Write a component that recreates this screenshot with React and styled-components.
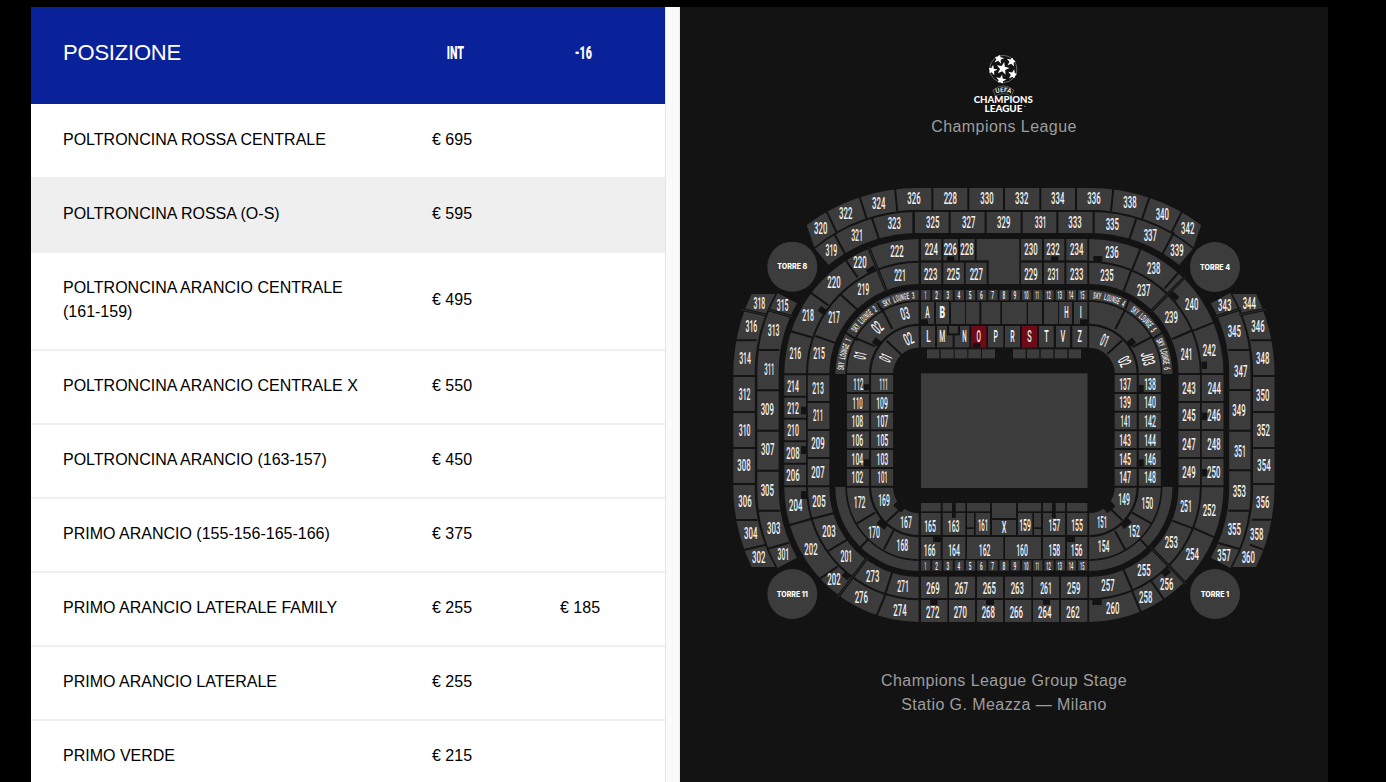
import React from "react";
import styled, { createGlobalStyle } from "styled-components";

const Global = createGlobalStyle`
  * { box-sizing: border-box; }
  html, body { margin: 0; background: #000; overflow: hidden; }
  body { font-family: "Liberation Sans", Arial, sans-serif; }
`;

const Page = styled.div`
  display: flex;
  width: 1386px;
  height: 782px;
  padding: 7px 58px 0 31px;
  background: #000;
  overflow: hidden;
`;
const Prices = styled.section`
  width: 634px;
  background: #fff;
  overflow: hidden;
`;
const Gutter = styled.div`
  width: 15px;
  background: #fafafa;
  border-left: 1px solid #e6e6e6;
  border-right: 1px solid #ededed;
`;
const HeadRow = styled.div`
  display: grid;
  grid-template-columns: 329px 127px 129px;
  align-items: center;
  height: 97px;
  padding: 0 0 6px 32px;
  background: #092199;
  color: #fff;
`;
const HeadTitle = styled.span`
  font-size: 22px;
  letter-spacing: -0.2px;
`;
const HeadCol = styled.span`
  text-align: center;
  font-family: Roboto, sans-serif;
  font-size: 19px;
  font-weight: 900;
  span { display: inline-block; transform: scaleX(0.56); }
`;
const Row = styled.div`
  display: grid;
  grid-template-columns: 329px 128px 128px;
  align-items: center;
  padding: 23px 0 25px 32px;
  margin-top: ${(p) => (p.$first ? 1 : 0)}px;
  border-bottom: 2px solid #efefef;
  background: ${(p) => (p.$active ? "#efefef" : "#fff")};
  color: #000;
  font-size: 16px;
  line-height: 24px;
`;
const Name = styled.span`
  white-space: pre-line;
`;
const Price = styled.span`
  padding-left: 40px;
`;
const MapPanel = styled.section`
  display: flex;
  flex-direction: column;
  align-items: center;
  width: 648px;
  background: #131313;
  color: #9d9d9d;
`;
const Emblem = styled.svg`
  display: block;
  width: 72px;
  height: 66px;
  margin-top: 43px;
`;
const Caption = styled.p`
  margin: ${(p) => p.$top}px 0 0;
  font-size: 16px;
  line-height: 24px;
  letter-spacing: 0.43px;
  text-align: center;
`;
const StadiumMap = styled.svg`
  display: block;
  width: 560px;
  height: 450px;
  margin: 41px 0 0 2px;
`;
const Cell = styled.rect`
  fill: ${(p) => p.$fill || "#3c3c3c"};
`;
const Cut = styled.path`
  fill: none;
  stroke: #131313;
  stroke-width: ${(p) => p.$w || 6};
`;
const SectorLabel = styled.text`
  fill: #f4f4f4;
  font-family: Roboto, sans-serif;
  font-weight: ${(p) => p.$weight || 500};
  text-anchor: middle;
`;

const ROWS = [
  ["POLTRONCINA ROSSA CENTRALE", "€ 695"],
  ["POLTRONCINA ROSSA (O-S)", "€ 595"],
  ["POLTRONCINA ARANCIO CENTRALE\n(161-159)", "€ 495"],
  ["POLTRONCINA ARANCIO CENTRALE X", "€ 550"],
  ["POLTRONCINA ARANCIO (163-157)", "€ 450"],
  ["PRIMO ARANCIO (155-156-165-166)", "€ 375"],
  ["PRIMO ARANCIO LATERALE FAMILY", "€ 255", "€ 185"],
  ["PRIMO ARANCIO LATERALE", "€ 255"],
  ["PRIMO VERDE", "€ 215"],
];

/* The map is drawn in tiles of 3 units per pixel; each tile has its own origin. */
const TILES = {
  nw: [725, 180], n: [905, 180], ne: [1085, 180],
  w: [725, 365], e: [1085, 365],
  sw: [725, 480], s: [905, 480], se: [1085, 480],
};

/* top, bottom and the x1-x2 pairs of one row of cells */
const CELLS = {
  n: [
    [24, 90, [[40, 553]]],
    [96, 159, [[40, 553]]],
    [177, 241, [[48, 109], [115, 159], [165, 209], [215, 343], [348, 411], [417, 478], [484, 547]]],
    [248, 312, [[48, 109], [115, 177], [182, 245], [348, 411], [417, 478], [484, 547]]],
    [240, 312, [[251, 343]]],
    [366, 432, [[48, 87], [93, 132], [138, 180], [183, 223], [229, 286], [291, 365], [369, 411], [417, 459], [462, 501], [507, 547]]],
    [438, 502, [[48, 90], [96, 143], [149, 193], [249, 295], [300, 345], [402, 446], [453, 495], [502, 547]]],
    [508, 535, [[66, 103], [107, 146], [149, 187], [190, 228], [231, 270], [324, 362], [366, 403], [407, 445], [449, 487], [491, 528]]],
  ],
  s: [
    [69, 94, [[48, 107], [113, 141], [152, 181], [186, 255], [339, 408], [414, 441], [452, 480], [486, 547]]],
    [69, 114, [[261, 333]]],
    [99, 165, [[48, 107], [113, 181], [212, 255], [339, 382], [414, 480], [486, 547]]],
    [99, 142, [[186, 207], [387, 408]]],
    [147, 165, [[186, 207], [387, 408]]],
    [120, 165, [[261, 333]]],
    [171, 237, [[48, 107], [113, 181], [186, 295], [300, 408], [414, 480], [486, 547]]],
    [290, 354, [[48, 127], [132, 210], [216, 294], [300, 379], [384, 462], [468, 547]]],
    [360, 426, [[48, 127], [132, 210], [216, 294], [300, 379], [384, 462], [468, 547]]],
  ],
};

const CUTS = {
  nw: "M305 94L335 158M403 48L425 116M510 26L517 94M566 94V162M440 112L463 180M328 163L361 223M362 240L398 292M257 338L310 376M344 341L396 388M195 453L260 472M271 468L335 490M457 368L475 398M470 385L502 447M360 457L400 482M395 475L450 499M485 482L530 525M30 481H95M95 510H163",
  n: "M82 22V92M190 22V92M297 22V92M406 22V92M513 22V92M26 94V162M134 94V162M242 94V162M350 94V162M457 94V162M566 94V162",
  ne: "M85 26L78 94M194 50L171 117M291 94L259 158M154 115L132 181M267 157L232 222M168 202L142 268M141 266L116 333M282 276L238 326M387 427L325 452M325 450L262 477M133 355L121 387M203 476L230 459M121 388L91 447M143 501L202 470M112 481L67 522M497 481H563M430 510H495",
  w: "M20 33H93M20 141H93M20 249H93M20 357H93M95 76H164M95 197H164M95 317H164M175 28H245M175 95H245M175 161H245M175 229H245M175 296H245M175 364H245M247 28H317M247 111H317M247 195H317M247 279H317M247 364H317M364 27H506M364 84H506M364 140H506M364 196H506M364 252H506M364 309H506M364 365H506",
  e: "M500 33H573M500 141H573M500 249H573M500 357H573M430 75H499M430 197H499M430 316H499M278 27H420M278 111H420M278 195H420M278 279H420M278 364H420M87 27H230M87 84H230M87 140H230M87 196H230M87 252H230M87 309H230M87 365H230",
  sw: "M30 120H98M98 92H165M56 210L125 194M128 206L192 188M192 136L258 117M258 117L328 99M308 214L367 179M283 297L338 260M402 207L430 177M395 131L450 98M477 208L506 150M485 125L530 84M478 350L502 276M455 407L479 350",
  se: "M503 12H573M500 119H567M430 92H497M400 189L467 208M495 194L535 209M262 122L325 146M325 144L389 172M140 97L200 131M90 153L121 209M78 88L112 121M166 178L193 207M116 270L143 333M199 304L238 360M141 333L168 398",
};

const SEAMS = {
  nw: "M430 200L485 335M48 388L128 406M128 389L203 411",
  ne: "M302 288L198 394M391 411L468 387M463 404L543 388",
  sw: "M427 233L338 352",
  se: "M198 203L304 312",
};

/* x, y, width, height, angle */
const NOTCHES = {
  nw: [[425, 262, 26, 16, -28], [281, 383, 24, 18, 35], [444, 477, 24, 20, 35]],
  n: [[126, 229, 22, 14], [438, 229, 22, 14], [48, 418, 21, 16], [525, 418, 24, 16], [126, 436, 39, 30], [204, 489, 22, 14]],
  ne: [[25, 228, 27, 17], [255, 340, 26, 16, 42], [350, 545, 16, 22], [126, 478, 24, 20, -38]],
  w: [[417, 58, 16, 18], [417, 283, 16, 22], [228, 125, 16, 23], [228, 243, 16, 24]],
  e: [[351, 143, 15, 22], [351, 312, 15, 22], [161, 60, 15, 22], [161, 283, 15, 22]],
  sw: [[228, 33, 18, 24], [353, 278, 22, 18, 38], [457, 124, 30, 18, 40], [508, 68, 32, 22, 40]],
  s: [[141, 92, 11, 22], [441, 92, 11, 22], [84, 169, 24, 17], [485, 169, 25, 17], [76, 358, 22, 17], [243, 358, 24, 17], [414, 358, 21, 17]],
  se: [[22, 356, 28, 19], [232, 270, 24, 16, -38], [108, 121, 30, 18, -42], [56, 70, 32, 22, -40]],
};

const LABELS = {
  nw: "320 287 145,322 362 100,324 461 69,326 567 54,319 319 209,321 396 165,323 508 129,222 516 212,220 405 246,221 525 285,220 327 307,219 415 328,218 249 406,217 327 412,216 211 520,215 282 520,318 103 370,315 173 376,316 79 438,313 146 450,314 60 533,311 133 568,03 540 400 -15,02 457 442 -45,02 550 476 -25,01 405 526 -78,01 482 533 -65",
  n: "228 136 54,330 246 54,332 350 54,334 458 54,336 567 54,325 83 127,327 191 127,329 296 127,331 407 127,333 510 127,224 79 206,226 136 206,228 186 206,230 378 206,232 444 206,234 515 206,223 77 281,225 145 281,227 214 281,229 378 281,231 445 281,233 515 281,A 67 396,H 484 396,I 527 396,L 70 468,M 112 468,N 178 468,O 221 468,P 272 468,R 322 468,S 373 468,T 424 468,V 474 468,Z 524 468",
  ne: "338 135 66,340 232 102,342 308 144,335 82 131,337 196 165,339 276 210,236 81 216,238 206 264,235 66 285,237 176 329,240 320 373,239 259 411,241 305 523,242 373 509,343 419 376,344 493 370,345 448 452,346 519 437,348 533 535,347 467 572,01 59 481 22,02 119 544 62,J03 189 536 75",
  w: "312 59 87,310 59 194,308 57 299,309 127 132,307 128 253,305 127 376,214 204 62,212 204 128,210 204 196,208 204 264,206 204 329,213 279 68,211 279 151,209 279 235,207 279 320,112 400 56,110 398 113,108 397 168,106 397 225,104 397 281,102 397 336,111 476 56,109 471 113,107 472 168,105 472 225,103 472 281,101 473 336",
  e: "137 120 56,139 120 112,141 122 169,143 120 225,145 120 281,147 120 336,138 195 56,140 195 112,142 195 168,144 195 225,146 195 281,148 195 336,243 312 68,245 312 151,247 312 236,249 312 320,244 388 68,246 387 151,248 387 236,250 386 320,349 462 135,351 465 257,353 463 378,350 533 90,352 535 196,354 537 301",
  sw: "306 60 63,304 77 160,302 101 230,303 146 145,301 175 222,204 212 76,205 282 63,203 312 153,202 258 207,201 364 229,202 327 298,276 409 351,274 525 390,273 443 289,271 534 317,172 404 65,169 477 61,170 447 156,168 532 196,167 543 125",
  s: "165 75 137,163 146 137,161 234 135,159 360 135,157 448 135,155 516 135,166 74 210,164 147 210,162 239 210,160 351 210,158 448 210,156 515 210,269 84 324,267 169 324,265 253 324,263 337 324,261 423 324,259 506 324,272 83 396,270 166 396,268 250 396,266 334 396,264 419 396,262 504 396",
  se: "149 117 58,150 187 70,151 51 125,152 147 152,154 56 198,251 303 78,252 373 91,253 259 186,254 322 223,255 177 271,256 245 312,257 69 316,258 182 351,260 83 385,355 448 147,356 533 65,358 515 163,357 417 225,360 490 232",
};

/* tile, centre x, first angle and last angle, clockwise from the top */
const LOUNGES = [
  ["nw", 583, -86, -64.5], ["nw", 583, -56, -34.5], ["nw", 583, -26.5, -4.5],
  ["ne", 10, 4.5, 26.5], ["ne", 10, 34.5, 56], ["ne", 10, 64.5, 86],
];

const tile = (k) => `translate(${TILES[k][0]} ${TILES[k][1]}) scale(0.333333)`;
const WIDTHS = { 1: 0.17, I: 0.12, M: 0.35, V: 0.28 };
const glyphWidth = (s, size) => [...s].reduce((w, c) => w + (WIDTHS[c] || 0.26), 0) * size;

function Label({ s, x, y, angle = 0, size = 51, width, weight }) {
  return (
    <SectorLabel
      fontSize={size}
      $weight={weight}
      textLength={width || glyphWidth(s, size)}
      lengthAdjust="spacingAndGlyphs"
      transform={`translate(${x} ${y}) rotate(${angle})`}
      y={size * 0.355}
    >
      {s}
    </SectorLabel>
  );
}

function LoungeName({ index }) {
  const [k, cx, from, to] = LOUNGES[index];
  const chars = [...`SKY LOUNGE ${index + 1}`];
  return (
    <g transform={tile(k)}>
      {chars.map((c, i) =>
        c === " " ? null : (
          <SectorLabel
            key={i}
            fontSize={27}
            $weight={500}
            textLength={7.5}
            lengthAdjust="spacingAndGlyphs"
            transform={`rotate(${from + ((to - from) * i) / (chars.length - 1)} ${cx} 582)`}
            x={cx}
            y={582 - 227}
          >
            {c}
          </SectorLabel>
        )
      )}
    </g>
  );
}

const quarter = (R, r, x = 2) => `M${-R} 0A${R} ${R} 0 0 1 ${-x} ${-R}V${-r}A${r} ${r} 0 0 0 ${-r} 0Z`;

/* One corner of the bowl around its own centre; mirrored for the other three. */
function Corner({ x, y, sx = 1, sy = 1, upper }) {
  return (
    <g transform={`translate(${x} ${y}) scale(${sx / 3} ${sy / 3})`} fill="#3c3c3c">
      <path d={quarter(405, 340)} />
      <path d={quarter(334, 270)} />
      <path d={quarter(252, 222)} />
      <path d={quarter(217, 151)} />
      <path d={quarter(144, 79)} />
      {upper && (
        <>
          <path d="M-338 -447A558 558 0 0 1 0 -558V-493A493 493 0 0 0 -315 -380Z" />
          <path d="M-313 -376A487 487 0 0 1 0 -486V-423A423 423 0 0 0 -272 -327Z" />
        </>
      )}
      <path d="M-558 0A558 558 0 0 1 -503 -240H-432A494 494 0 0 0 -494 0Z" />
      <path d="M-486 0A487 487 0 0 1 -425 -243L-367 -212A424 424 0 0 0 -422 0Z" />
    </g>
  );
}

function SkyCells({ y, label }) {
  return Array.from({ length: 15 }, (_, i) => (
    <g key={i}>
      <Cell x={48 + i * 33.65} y={y} width={28} height={31} />
      <Label s={String(i + 1)} x={61 + i * 33.6} y={label} size={31} />
    </g>
  ));
}

function Bowl() {
  return (
    <StadiumMap viewBox="725 180 560 450">
      <Corner x={919.3} y={374} upper />
      <Corner x={1088.5} y={374} sx={-1} upper />
      <Corner x={919.3} y={487} sy={-1} />
      <Corner x={1088.5} y={487} sx={-1} sy={-1} />
      {[[186, 21.5], [162, 21.3], [135, 21.7], [111.5, 21.5], [72.3, 22], [48.2, 22]].map(([r, w]) => (
        <g key={r}>
          <Cell x={919.3 - r} y={373.5} width={w} height={114} />
          <Cell x={1088.5 + r - w} y={373.5} width={w} height={114} />
        </g>
      ))}
      {Object.entries(CELLS).map(([k, rows]) => (
        <g key={k} transform={tile(k)}>
          {rows.map(([y1, y2, xs]) =>
            xs.map(([a, b]) => <Cell key={`${y1}-${a}`} x={a} y={y1} width={b - a} height={y2 - y1} />)
          )}
          <SkyCells y={k === "n" ? 330 : 241} label={k === "n" ? 345 : 258} />
        </g>
      ))}
      <g transform={tile("n")}>
        <Cell x={199} y={438} width={45} height={65} $fill="#6d0b18" />
        <Cell x={351} y={438} width={45} height={65} $fill="#6d0b18" />
      </g>
      <Cell x={921} y={373.3} width={166.5} height={114.7} />
      {Object.entries(CUTS).map(([k, d]) => (
        <Cut key={k} d={d} transform={tile(k)} />
      ))}
      {Object.entries(SEAMS).map(([k, d]) => (
        <g key={k} transform={tile(k)}>
          <Cut d={d} $w={9} />
          <path d={d} stroke="#333" strokeWidth={2.5} fill="none" />
        </g>
      ))}
      {Object.entries(NOTCHES).map(([k, list]) => (
        <g key={k} transform={tile(k)}>
          {list.map(([x, y, w, h, a = 0]) => (
            <Cell key={`${x}-${y}`} x={x} y={y} width={w} height={h} $fill="#131313" transform={`rotate(${a} ${x + w / 2} ${y + h / 2})`} />
          ))}
        </g>
      ))}
      <g transform={tile("n")}>
        <Cell x={132} y={438} width={27} height={22} />
        <Label s="B" x={112} y={396} width={17} weight={900} />
      </g>
      <g transform={tile("s")}>
        <Label s="X" x={297} y={142} width={14} />
      </g>
      {Object.entries(LABELS).map(([k, text]) => (
        <g key={k} transform={tile(k)}>
          {text.split(",").map((entry) => {
            const [s, x, y, a] = entry.split(" ");
            return <Label key={entry} s={s} x={+x} y={+y} angle={a ? +a : 0} />;
          })}
        </g>
      ))}
      {LOUNGES.map((_, i) => (
        <LoungeName key={i} index={i} />
      ))}
      {[["TORRE 8", 792.3, 266.7], ["TORRE 4", 1215, 267], ["TORRE 11", 792.3, 594], ["TORRE 1", 1215, 594]].map(([s, x, y]) => (
        <g key={s}>
          <circle cx={x} cy={y} r={25} fill="#3c3c3c" />
          <text x={x} y={y + 2.5} fill="#fff" fontFamily="Inter, sans-serif" fontWeight="800" fontSize="7" textAnchor="middle" textLength={s === "TORRE 11" ? 31 : s === "TORRE 1" ? 28.5 : 30} lengthAdjust="spacingAndGlyphs">{s}</text>
        </g>
      ))}
    </StadiumMap>
  );
}

const star = (cx, cy, r, rot = 0) =>
  Array.from({ length: 10 }, (_, i) => {
    const a = ((rot - 90 + i * 36) * Math.PI) / 180;
    const d = i % 2 ? r * 0.4 : r;
    return `${(cx + d * Math.cos(a)).toFixed(2)},${(cy + d * Math.sin(a)).toFixed(2)}`;
  }).join(" ");

function Logo() {
  return (
    <Emblem viewBox="968 50 72 66">
      <defs>
        <clipPath id="ball"><circle cx="1003.3" cy="69" r="14.2" /></clipPath>
        <path id="uefa" d="M991 95.6Q1003.3 88.4 1016 95.6" />
      </defs>
      <g fill="#fff" clipPath="url(#ball)">
        <polygon points={star(1002.8, 68.6, 6.8, 12)} />
        {[0, 1, 2, 3, 4].map((i) => {
          const a = ((i * 72 - 42) * Math.PI) / 180;
          return <polygon key={i} points={star(1003.3 + 11.3 * Math.cos(a), 69 + 11.3 * Math.sin(a), 5.6, i * 72 + 12)} />;
        })}
      </g>
      <circle cx="1003.3" cy="69" r="13.6" fill="none" stroke="#fff" strokeWidth="0.6" opacity="0.6" />
      <path d="M993 90.2Q1003.3 81.5 1013.8 90.2L1011.3 96Q1003.3 91.2 995.5 96Z" fill="none" stroke="#fff" strokeWidth="0.5" opacity="0.6" />
      <text fill="#fff" fontFamily="Roboto, sans-serif" fontWeight="500" fontSize="6.4" textAnchor="middle">
        <textPath href="#uefa" startOffset="50%">UEFA</textPath>
      </text>
      <g fill="#fff" fontFamily="Lato, sans-serif" fontWeight="900" fontSize="8.6" textAnchor="middle">
        <text x="1003.3" y="103" textLength="59" lengthAdjust="spacingAndGlyphs">CHAMPIONS</text>
        <text x="1003.5" y="111.8" textLength="38" lengthAdjust="spacingAndGlyphs">LEAGUE</text>
      </g>
      <circle cx="1025" cy="106.3" r="0.6" fill="#bbb" />
    </Emblem>
  );
}

export default function App() {
  return (
    <Page>
      <Global />
      <Prices>
        <HeadRow>
          <HeadTitle>POSIZIONE</HeadTitle>
          <HeadCol><span>INT</span></HeadCol>
          <HeadCol><span>-16</span></HeadCol>
        </HeadRow>
        {ROWS.map(([name, full, reduced], i) => (
          <Row key={name} $first={i === 0} $active={i === 1}>
            <Name>{name}</Name>
            <Price>{full}</Price>
            <Price>{reduced}</Price>
          </Row>
        ))}
      </Prices>
      <Gutter />
      <MapPanel>
        <Logo />
        <Caption $top={-1}>Champions League</Caption>
        <Bowl />
        <Caption $top={39}>Champions League Group Stage<br />Statio G. Meazza — Milano</Caption>
      </MapPanel>
    </Page>
  );
}
